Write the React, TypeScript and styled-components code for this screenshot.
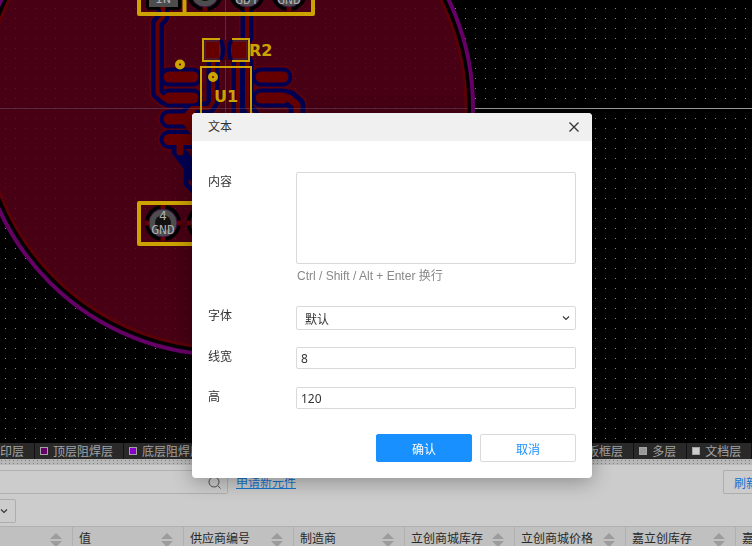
import React from 'react';
import styled, { createGlobalStyle } from 'styled-components';

const Global = createGlobalStyle`
  * { box-sizing: border-box; }
  html, body { margin: 0; height: 100%; overflow: hidden; }
  body, button, input, select, textarea {
    font-family: 'Noto Sans CJK SC', sans-serif;
    font-size: 12px;
  }
`;

const Page = styled.div`
  display: flex;
  flex-direction: column;
  height: 100vh;
  background: #000;
`;

const Board = styled.svg`
  display: block;
  flex: 1;
  min-height: 0;
  width: 100%;
`;

const LayerBar = styled.div`
  display: flex;
  flex: 0 0 16px;
  overflow: hidden;
  background: #292929;
`;

const Layer = styled.div<{ $first?: boolean }>`
  display: flex;
  flex: none;
  align-items: center;
  gap: 5px;
  padding: 0 10px 0 ${p => (p.$first ? 0 : 5)}px;
  border-left: ${p => (p.$first ? 0 : 1)}px solid #111;
  color: #a3a3a3;
  line-height: 16px;
  white-space: nowrap;
`;

const Swatch = styled.span<{ $color: string }>`
  width: 8px;
  height: 8px;
  border: 1px solid #a3a3a3;
  background: ${p => p.$color};
`;

const Splitter = styled.div`
  flex: 0 0 6px;
  background: conic-gradient(from 270deg at 1px 1px, #808080 90deg, #b8b8b8 0) 1px 1px / 4px 3px;
`;

const Panel = styled.section`
  flex: 0 0 81px;
  overflow: hidden;
  background: #ccc;
`;

const SearchRow = styled.div`
  display: flex;
  align-items: center;
  gap: 8px;
  padding-top: 5px;
`;

const SearchBox = styled.label`
  display: flex;
  align-items: center;
  width: 228px;
  height: 24px;
  padding-right: 6px;
  border: 1px solid #b0b0b0;
  border-left: 0;
  border-radius: 0 2px 2px 0;
`;

const SearchInput = styled.input`
  flex: 1;
  min-width: 0;
  border: 0;
  outline: 0;
  background: transparent;
`;

const RequestLink = styled.a`
  color: #1473cc;
  line-height: 18px;
`;

const RefreshButton = styled.button`
  width: 29px;
  height: 24px;
  margin-left: auto;
  padding: 0 0 0 10px;
  overflow: hidden;
  border: 1px solid #adadad;
  border-right: 0;
  border-radius: 2px 0 0 2px;
  background: transparent;
  color: #1473cc;
  text-align: left;
  white-space: nowrap;
`;

const FilterButton = styled.button`
  display: flex;
  align-items: center;
  width: 16px;
  height: 24px;
  margin: 5px 0 3px;
  padding: 0;
  border: 1px solid #adadad;
  border-left: 0;
  border-radius: 0 2px 2px 0;
  background: transparent;
`;

const Table = styled.table`
  width: 100%;
  table-layout: fixed;
  border-collapse: separate;
  border-spacing: 0;
`;

const Col = styled.col<{ $width?: number }>`
  width: ${p => (p.$width ? `${p.$width}px` : 'auto')};
`;

const HeadCell = styled.th<{ $first?: boolean }>`
  height: 26px;
  padding: 0 10px 0 6px;
  overflow: hidden;
  border-top: 1px solid #b0b0b0;
  border-left: ${p => (p.$first ? 0 : 1)}px solid #b0b0b0;
  background: #c0c0c0;
  color: #292929;
  font-weight: 400;
  text-align: left;
  white-space: nowrap;
`;

const HeadContent = styled.div`
  display: flex;
  align-items: center;
  justify-content: space-between;
`;

const HeadText = styled.span`
  padding-bottom: 4px;
  line-height: 14px;
`;

const Overlay = styled.div`
  position: fixed;
  inset: 0;
  display: flex;
  align-items: center;
  justify-content: center;
  padding: 45px 0 0 32px;
`;

const Dialog = styled.form`
  width: 400px;
  overflow: hidden;
  border-radius: 4px;
  background: #fff;
  box-shadow: 0 4px 20px rgba(0, 0, 0, 0.3);
  color: #333;
`;

const DialogHeader = styled.header`
  display: flex;
  align-items: center;
  justify-content: space-between;
  height: 28px;
  padding: 0 12px 0 16px;
  background: #f0f0f0;
`;

const Title = styled.h2`
  margin: 0;
  padding-bottom: 2px;
  font-size: 12px;
  font-weight: 400;
  line-height: 18px;
`;

const CloseButton = styled.button`
  display: flex;
  padding: 0;
  border: 0;
  background: transparent;
`;

const DialogBody = styled.div`
  display: flex;
  flex-direction: column;
  padding: 31px 16px 16px;
`;

const Field = styled.div<{ $gap: number }>`
  display: grid;
  grid-template-columns: 88px 1fr;
  align-items: start;
  margin-bottom: ${p => p.$gap}px;
`;

const FieldLabel = styled.label`
  line-height: 18px;
`;

const TextArea = styled.textarea`
  display: block;
  width: 100%;
  height: 92px;
  border: 1px solid #d9d9d9;
  border-radius: 2px;
  resize: none;
`;

const Hint = styled.p`
  margin: 3px 0 0 1px;
  color: #888;
  font-family: 'Liberation Sans', 'Noto Sans CJK SC', sans-serif;
  line-height: 18px;
`;

const SelectWrap = styled.div`
  display: grid;
  align-items: center;

  > * { grid-area: 1 / 1; }
  > svg { justify-self: end; margin-right: 6px; pointer-events: none; }
`;

const Select = styled.select`
  appearance: none;
  width: 100%;
  height: 24px;
  padding: 0 8px;
  border: 1px solid #d9d9d9;
  border-radius: 2px;
  background: #fff;
  color: #333;
`;

const Input = styled.input`
  width: 100%;
  height: 22px;
  padding: 0 4px;
  border: 1px solid #d9d9d9;
  border-radius: 2px;
  color: #333;
  font-family: 'Noto Sans', sans-serif;
`;

const Actions = styled.div`
  display: flex;
  justify-content: flex-end;
  gap: 8px;
`;

const ActionButton = styled.button<{ $primary?: boolean }>`
  width: 96px;
  height: 28px;
  padding: 0;
  border: 1px solid ${p => (p.$primary ? '#1890ff' : '#d9d9d9')};
  border-radius: 2px;
  background: ${p => (p.$primary ? '#1890ff' : '#fff')};
  color: ${p => (p.$primary ? '#fff' : '#1890ff')};
`;

const GOLD = '#cca300';
const RED = '#660000';
const NAVY = '#000052';
const MASK = '#470014';

const traces = [
  'M163 8V17L157.500 23V93L164 99',
  'M247 8V38',
  'M213 62V102L209 108H192L186 115',
  'M238 62V118',
  'M247 62V108L254 116',
];

const slots = [
  'M169 77H193',
  'M169 98H193',
  'M169 119H196',
  'M169 139.500H196',
  'M261 77H283',
  'M261 98H283',
];

function Copper() {
  return (
    <g fill="none" strokeLinecap="round" strokeLinejoin="round">
      <g stroke="#5a000c">
        {traces.map(d => <path key={d} d={d} strokeWidth="17" />)}
        {slots.map(d => <path key={d} d={d} strokeWidth="23" />)}
        <path d="M285 98H290L297 105V125" strokeWidth="21" />
        <path d="M174 150L187 168V184L196 194" strokeWidth="8" />
      </g>
      <g stroke={NAVY}>
        {traces.map(d => <path key={d} d={d} strokeWidth="13" />)}
        {slots.map(d => <path key={d} d={d} strokeWidth="19" />)}
        <path d="M283 98H289L297 105V125" strokeWidth="17" />
        <path d="M174 144V152L186 168V184L196 194" strokeWidth="5" />
        <path d="M180 150L192 166V176" strokeWidth="10" />
      </g>
      <g stroke={RED}>
        {traces.map(d => <path key={d} d={d} strokeWidth="4" />)}
        {slots.map(d => <path key={d} d={d} strokeWidth="11" />)}
        <path d="M285 98H289L297 105V125M180 141V152M184 119L192 111M184 119L192 130" strokeWidth="7" />
      </g>
    </g>
  );
}

interface PadProps {
  x: number;
  y: number;
  top?: string;
  bottom?: string;
  square?: boolean;
}

function Pad({ x, y, top, bottom, square }: PadProps) {
  return (
    <g>
      {square
        ? <rect x={x - 17} y={y - 17} width="35" height="35" rx="4" fill="#000" />
        : <circle cx={x} cy={y} r="18" fill="#000" />}
      <path d={`M${x - 18} ${y}H${x + 18}M${x} ${y - 18}V${y + 18}`} stroke={RED} strokeWidth="5" />
      {square
        ? <rect x={x - 14} y={y - 14} width="29" height="29" fill="#4d4d4d" />
        : <circle cx={x} cy={y} r="14" fill="#4d4d4d" stroke="#42104c" strokeWidth="1" />}
      <circle cx={x} cy={y} r="8" fill="#111" />
      <g fill="#adadad" fontFamily="DejaVu Sans Mono, monospace" fontSize="13" textAnchor="middle">
        <text x={x} y={y - 3}>{top}</text>
        <text x={x} y={y + 11}>{bottom}</text>
      </g>
    </g>
  );
}

function PcbBoard() {
  return (
    <Board aria-label="PCB">
      <defs>
        <pattern id="dots" x="5" y="8" width="10" height="10" patternUnits="userSpaceOnUse">
          <rect width="1" height="1" fill="#858585" />
        </pattern>
        <pattern id="faint" x="5" y="8" width="10" height="10" patternUnits="userSpaceOnUse">
          <rect width="1" height="1" fill="#5a1a2c" />
        </pattern>
      </defs>
      <rect width="100%" height="100%" fill="#000" />
      <rect width="100%" height="100%" fill="url(#dots)" />
      <path d="M0 108.500H4000" stroke="#999" />
      <circle cx="225" cy="107" r="248" fill="#000" stroke="#660066" strokeWidth="4" />
      <circle cx="225" cy="107" r="241" fill={MASK} stroke="#5c0008" strokeWidth="3" />
      <circle cx="225" cy="107" r="239" fill="url(#faint)" />
      <Copper />
      <path d="M0 108.500H468M225.500 0V346" stroke="#8080b0" strokeOpacity="0.3" />

      <Pad x={163} y={-8} square bottom="IN" />
      <Pad x={205} y={-7} />
      <Pad x={247} y={-7} bottom="GDT" />
      <Pad x={289} y={-7} bottom="GND" />
      <Pad x={163} y={223} top="4" bottom="GND" />
      <Pad x={205} y={223} />

      <path d="M204 40H248V60H204Z" fill={MASK} />
      <path d="M205 41H220V59H205ZM231 41H247V59H231Z" fill={RED} stroke="#42304c" />
      <path d="M221 40Q225 50 221 60M231 40Q227 50 231 60" fill="none" stroke={NAVY} strokeWidth="4" />
      <g fill="none" stroke={GOLD}>
        <path d="M139 0V14H313V0M184.500 0V14M200 203H139V244H200" strokeWidth="4" strokeLinejoin="round" />
        <path d="M220 39H203V61H220M232 39H249V61H232M201 120V67H251V120" strokeWidth="2" />
        <circle cx="180" cy="64.500" r="3" strokeWidth="4" />
        <circle cx="213" cy="77" r="3" strokeWidth="4" />
      </g>
      <g fill={GOLD} fontFamily="DejaVu Sans, sans-serif" fontSize="16" fontWeight="700">
        <text x="249" y="56">R2</text>
        <text x="214" y="102">U1</text>
      </g>
    </Board>
  );
}

const Chevron = () => (
  <svg width="8" height="6" viewBox="0 0 8 6" fill="none" stroke="#333" strokeWidth="1.1" aria-hidden="true">
    <path d="M1 1.500L4 4.500L7 1.500" />
  </svg>
);

const SearchIcon = () => (
  <svg width="13" height="13" viewBox="0 0 13 13" fill="none" stroke="#525252" aria-hidden="true">
    <circle cx="6" cy="6" r="5" />
    <path d="M9.500 9.500L12.500 12.500" />
  </svg>
);

const SortIcon = () => (
  <svg width="12" height="14" viewBox="0 0 12 14" fill="#9c9c9c" aria-hidden="true">
    <path d="M6 0L12 6H0ZM0 8H12L6 14Z" />
  </svg>
);

const layers = [
  { name: '印层' },
  { name: '顶层阻焊层', color: '#660066' },
  { name: '底层阻焊层', color: '#8800cc' },
  { name: '顶层锡膏层', color: '#666666' },
  { name: '底层锡膏层', color: '#660000' },
  { name: '顶层装配层', color: '#29a329' },
  { name: '底层装配层', color: '#5050a0' },
  { name: '板框层', color: '#cc00cc' },
  { name: '多层', color: '#999999' },
  { name: '文档层', color: '#cccccc' },
  { name: '' },
];

const columns = [
  { name: '', width: 72 },
  { name: '值', width: 111 },
  { name: '供应商编号', width: 110 },
  { name: '制造商', width: 111 },
  { name: '立创商城库存', width: 110 },
  { name: '立创商城价格', width: 111 },
  { name: '嘉立创库存', width: 110 },
  { name: '嘉' },
];

export default function App() {
  return (
    <>
      <Global />
      <Page>
        <PcbBoard />
        <LayerBar>
          {layers.map((layer, i) => (
            <Layer key={i} $first={i === 0}>
              {layer.color && <Swatch $color={layer.color} />}
              {layer.name}
            </Layer>
          ))}
        </LayerBar>
        <Splitter />
        <Panel>
          <SearchRow>
            <SearchBox>
              <SearchInput aria-label="搜索" />
              <SearchIcon />
            </SearchBox>
            <RequestLink href="#">申请新元件</RequestLink>
            <RefreshButton>刷新</RefreshButton>
          </SearchRow>
          <FilterButton aria-label="筛选"><Chevron /></FilterButton>
          <Table>
            <colgroup>
              {columns.map((c, i) => <Col key={i} $width={c.width} />)}
            </colgroup>
            <thead>
              <tr>
                {columns.map((c, i) => (
                  <HeadCell key={i} $first={i === 0}>
                    <HeadContent>
                      <HeadText>{c.name}</HeadText>
                      {c.width && <SortIcon />}
                    </HeadContent>
                  </HeadCell>
                ))}
              </tr>
            </thead>
          </Table>
        </Panel>
      </Page>

      <Overlay>
        <Dialog role="dialog" aria-labelledby="dialog-title" onSubmit={e => e.preventDefault()}>
          <DialogHeader>
            <Title id="dialog-title">文本</Title>
            <CloseButton type="button" aria-label="关闭">
              <svg width="12" height="12" viewBox="0 0 12 12" stroke="#333" strokeWidth="1.3">
                <path d="M1.500 1.500L10.500 10.500M10.500 1.500L1.500 10.500" />
              </svg>
            </CloseButton>
          </DialogHeader>
          <DialogBody>
            <Field $gap={21}>
              <FieldLabel htmlFor="content">内容</FieldLabel>
              <div>
                <TextArea id="content" />
                <Hint>Ctrl / Shift / Alt + Enter 换行</Hint>
              </div>
            </Field>
            <Field $gap={17}>
              <FieldLabel htmlFor="font">字体</FieldLabel>
              <SelectWrap>
                <Select id="font"><option>默认</option></Select>
                <Chevron />
              </SelectWrap>
            </Field>
            <Field $gap={18}>
              <FieldLabel htmlFor="line-width">线宽</FieldLabel>
              <Input id="line-width" defaultValue="8" />
            </Field>
            <Field $gap={25}>
              <FieldLabel htmlFor="height">高</FieldLabel>
              <Input id="height" defaultValue="120" />
            </Field>
            <Actions>
              <ActionButton $primary type="submit">确认</ActionButton>
              <ActionButton type="button">取消</ActionButton>
            </Actions>
          </DialogBody>
        </Dialog>
      </Overlay>
    </>
  );
}
